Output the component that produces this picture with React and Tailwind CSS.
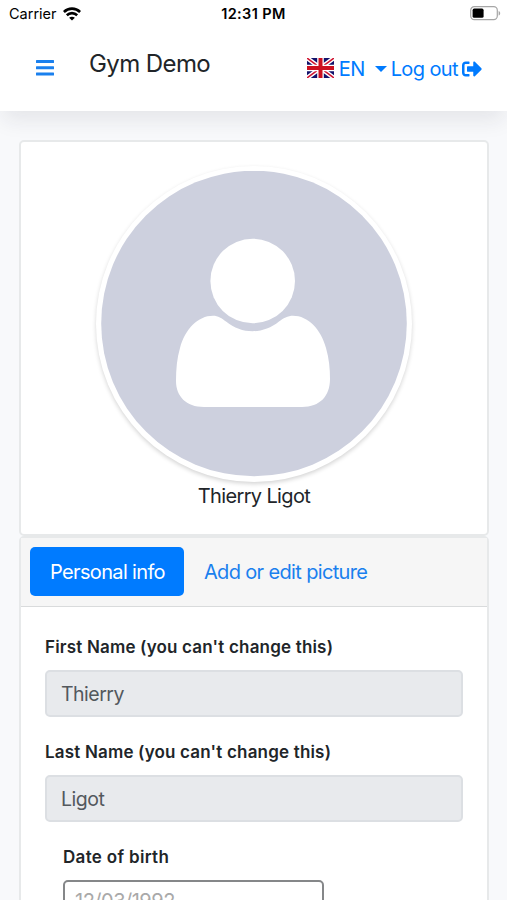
import { FaSignOutAlt } from 'react-icons/fa'

const TABS = [
  { label: 'Personal info', active: true },
  { label: 'Add or edit picture', active: false },
]

const NAME_FIELDS = [
  { label: "First Name (you can't change this)", value: 'Thierry' },
  { label: "Last Name (you can't change this)", value: 'Ligot' },
]

function WifiIcon() {
  return (
    <svg className="w-[18px] h-[14px]" viewBox="0 0 18 14" fill="none" stroke="#000" strokeWidth="2.6">
      <path d="M0.9 5C5.5 0.5 12.5 0.5 17.1 5" />
      <path d="M3.8 8.3C6.8 5.4 11.2 5.4 14.2 8.3" />
      <path d="M9 13.6L6.1 10.8C7.8 9.3 10.2 9.3 11.9 10.8Z" fill="#000" stroke="none" />
    </svg>
  )
}

function BatteryIcon() {
  return (
    <svg className="w-[31px] h-[15px]" viewBox="0 0 31 15">
      <rect x="0.7" y="0.7" width="26.6" height="13" rx="3.6" fill="#fff" stroke="#a6a6a6" strokeWidth="1.2" />
      <rect x="2.6" y="2.6" width="11" height="9.2" rx="1.6" fill="#000" />
      <path d="M28.6 5v4.6c1-.4 1.6-1.2 1.6-2.3S29.6 5.4 28.6 5z" fill="#a6a6a6" />
    </svg>
  )
}

function UkFlag() {
  return (
    <svg className="w-[27px] h-[20px] mb-px" viewBox="0 0 27 20">
      <rect width="27" height="20" fill="#12126b" />
      <path d="M0 0L27 20M27 0L0 20" stroke="#fff" strokeWidth="4.4" />
      <path d="M0 0L27 20M27 0L0 20" stroke="#cf1430" strokeWidth="1.5" />
      <path d="M13.5 0V20M0 10H27" stroke="#fff" strokeWidth="6.6" />
      <path d="M13.5 0V20M0 10H27" stroke="#cc1020" strokeWidth="4" />
    </svg>
  )
}

function Avatar() {
  return (
    <div className="w-[316px] h-[316px] p-[5px] rounded-full bg-white shadow-[0_2px_4px_rgba(0,0,0,0.17)]">
      <svg className="w-full h-full" viewBox="0 0 306 306">
        <circle cx="153" cy="152.5" r="152.8" fill="#cdd0de" />
        <circle cx="151.7" cy="110" r="42.3" fill="#fff" />
        <path
          d="M112 144.7C117 144.7 121 147.3 125 150.5C141 163.5 162 163.5 178 150.5C182 147.3 187 144.7 192 144.7C207 144.7 220 158 225 177C228 187 229 198 229 208C229 225 219 236 201 236H103C85 236 75 225 75 210C75 198 76 187 79 177C84 158 97 144.7 112 144.7Z"
          fill="#fff"
        />
      </svg>
    </div>
  )
}

function StatusBar() {
  return (
    <div className="h-[27px] pl-[9px] pr-[6px] grid grid-cols-3 items-center text-black">
      <div className="flex items-center gap-[6px] text-[14.5px]">
        <span>Carrier</span>
        <WifiIcon />
      </div>
      <div className="-ml-[3px] text-center text-[14.5px] tracking-[0.4px] font-semibold">12:31 PM</div>
      <div className="flex justify-end">
        <BatteryIcon />
      </div>
    </div>
  )
}

function Navbar() {
  return (
    <nav className="h-[84px] pl-9 pr-[25px] flex items-start text-[#007bff]">
      <svg className="w-[18px] h-[16px] mt-[33px]" viewBox="0 0 18 16" fill="#1a80ee">
        <rect width="18" height="3" rx="0.5" />
        <rect y="6.3" width="18" height="3" rx="0.5" />
        <rect y="12.6" width="18" height="3" rx="0.5" />
      </svg>
      <span className="ml-[35px] mt-[19px] text-[24px] tracking-[-0.6px] leading-9 text-[#212529]">Gym Demo</span>
      <div className="ml-auto mt-[26px] h-[31px] flex items-center text-[20px] tracking-[-0.6px] whitespace-nowrap">
        <UkFlag />
        <span className="ml-[5px] mt-px">EN</span>
        <span className="ml-[10px] border-x-[6px] border-x-transparent border-t-[6px] border-t-[#007bff]" />
        <span className="ml-[4px] mt-px">Log out</span>
        <FaSignOutAlt className="ml-[4px] size-5" />
      </div>
    </nav>
  )
}

export default function App() {
  return (
    <div className="w-[507px] h-[900px] overflow-hidden bg-[#f8f9fb] font-['Inter',sans-serif] text-[#212529]">
      <header className="h-[111px] bg-white shadow-[0_12px_20px_-3px_rgba(30,35,60,0.09)]">
        <StatusBar />
        <Navbar />
      </header>

      <main className="mt-[29px] ml-[19px] w-[470px]">
        {/* Profile picture */}
        <section className="h-[396px] pt-[24px] flex flex-col items-center bg-white border-2 border-[#e7e9ea] rounded-[5px]">
          <Avatar />
          <p className="-mt-px text-[20px] leading-[30px] tracking-[-0.65px]">Thierry Ligot</p>
        </section>

        {/* Profile form */}
        <section className="h-[500px] bg-white border-2 border-[#e7e9ea] rounded-[5px]">
          <div className="h-[69px] px-[9px] pt-[9px] flex bg-[#f6f6f6] border-b border-[#d9dbdc]">
            {TABS.map(({ label, active }) => (
              <button
                key={label}
                className={`h-[49px] pl-5 pr-[19px] rounded-[5px] text-[20px] tracking-[-0.65px] ${
                  active ? 'bg-[#007bff] text-white' : 'text-[#1a80ee]'
                }`}
              >
                {label}
              </button>
            ))}
          </div>

          <div className="px-6 pt-[25px]">
            {NAME_FIELDS.map(({ label, value }) => (
              <div key={label} className="h-[105px]">
                <label className="block h-[38px] text-[17px] tracking-[0.18px] leading-[30px] font-semibold">{label}</label>
                <div className="h-[47px] px-[14px] pt-[2px] flex items-center border-2 border-[#dcdfe3] rounded-[5px] bg-[#e8eaed] text-[19.5px] tracking-[-0.5px] text-[#53585d]">
                  {value}
                </div>
              </div>
            ))}
            <div className="pl-[18px]">
              <label className="block h-[38px] text-[17px] tracking-[0.32px] leading-[30px] font-semibold">Date of birth</label>
              <div className="w-[261px] h-[47px] px-[10px] pt-[4px] border-2 border-[#858789] rounded-[5px] text-[20px] tracking-[-0.5px] leading-[30px] text-[#a9a9a9]">
                12/03/1992
              </div>
            </div>
          </div>
        </section>
      </main>
    </div>
  )
}
